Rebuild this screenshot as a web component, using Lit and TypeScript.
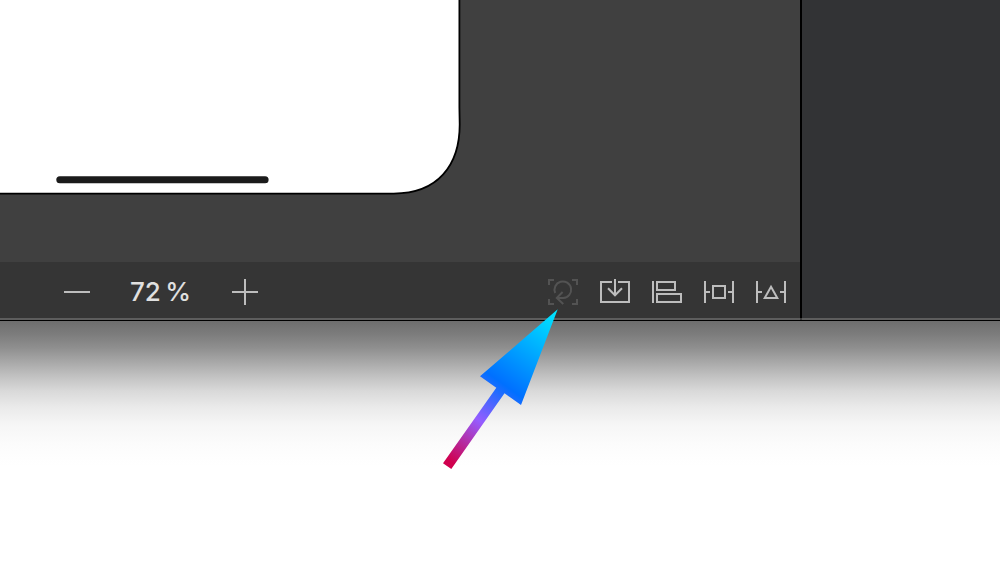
import { LitElement, html, css, svg } from "lit";
import { customElement } from "lit/decorators.js";

const icons = [
  { name: "Update frames", dim: true, art: svg`<path d="M1 6V1H6M24 1H29V6M1 20V25H6M24 25H29V20"/><path d="M7.2 14A8.3 8.3 0 1 1 15.3 19H9.5M14.6 13L8.8 18.9L15.3 25"/>` },
  { name: "Embed in", dim: false, art: svg`<path d="M12 3H1V23H29V3H18M15 0V16.5M8 9.3L15 16.3L22 9.3"/>` },
  { name: "Align", dim: false, art: svg`<path d="M1 2V24M5 3H23V11H5ZM5 15H29V23H5Z"/>` },
  { name: "Add constraints", dim: false, art: svg`<path d="M1 2V24M29 2V24M1 13H6M24 13H29M9 7H21V19H9Z"/>` },
  { name: "Resolve issues", dim: false, art: svg`<path d="M1 2V24M29 2V24M1 13H6M24 13H29M15 7.8L21.3 19H8.7Z"/>` },
];

@customElement("app-root")
export class AppRoot extends LitElement {
  static styles = css`
    :host { display: block; position: relative; width: 1000px; height: 584px; overflow: hidden; background: #fff; }
    svg { display: block; }
    .window { display: flex; height: 318px; }
    .editor { display: flex; flex-direction: column; width: 800px; border-right: 2px solid #000; }
    .canvas { height: 262px; background: #404040; }
    .toolbar { display: flex; align-items: center; justify-content: space-between; height: 56px; box-sizing: border-box; padding: 4px 14px 0 64px; background: #353535; }
    .zoom { display: flex; align-items: center; justify-content: space-between; width: 194px; color: #e0e0e0; font: 500 26px/26px Inter, sans-serif; }
    .value { white-space: pre; padding-right: 1px; word-spacing: -2.6px; }
    .tools { display: flex; gap: 22px; }
    .icon { fill: none; stroke: #bdbdbd; stroke-width: 2; }
    .dim { stroke: #535353; }
    .inspector { flex: 1; background: #323335; }
    .edge { height: 2px; background: linear-gradient(90deg, #5d5d5d 800px, #3c3c3c 800px 802px, #5d5d5d 802px); border-bottom: 1px solid #000; }
    .shadow { height: 263px; background: linear-gradient(#6e6e6e 0, #7c7c7c 13px, #8f8f8f 27px, #a8a8a8 41px, #c1c1c1 55px, #d9d9d9 70px, #eaeaea 86px, #f6f6f6 104px, #fcfcfc 124px, #fff 145px); }
    .pointer { position: absolute; left: 0; top: 0; }
  `;

  render() {
    return html`
      <div class="window">
        <div class="editor">
          <div class="canvas">
            <svg width="800" height="262" viewBox="0 0 800 262">
              <path d="M-5 -5H459.7V108L460 125C460 166 438 194 394 194H-5Z" fill="#fff" stroke="#000" stroke-width="1.8" transform="translate(-.3 -.4)"/>
              <rect x="56.3" y="176.3" width="212.3" height="7" rx="3.5" fill="#1b1b1b"/>
            </svg>
          </div>
          <div class="toolbar">
            <div class="zoom">
              <svg class="icon" width="26" height="26"><path d="M0 13H26"/></svg>
              <span class="value">72 %</span>
              <svg class="icon" width="26" height="26"><path d="M0 13H26M13 0V26"/></svg>
            </div>
            <div class="tools">
              ${icons.map((i) => html`<svg class="icon ${i.dim ? "dim" : ""}" width="30" height="26" viewBox="0 0 30 26" aria-label=${i.name}>${i.art}</svg>`)}
            </div>
          </div>
        </div>
        <div class="inspector"></div>
      </div>
      <div class="edge"></div>
      <div class="shadow"></div>
      <svg class="pointer" width="1000" height="584">
        <defs>
          <linearGradient id="flow" gradientUnits="userSpaceOnUse" x1="557" y1="310" x2="447" y2="466">
            <stop offset="0" stop-color="#00e8ff"/>
            <stop offset=".25" stop-color="#00aaff"/>
            <stop offset=".48" stop-color="#0070ff"/>
            <stop offset=".71" stop-color="#965cff"/>
            <stop offset=".97" stop-color="#d0004e"/>
          </linearGradient>
        </defs>
        <path d="M557.7 309.3L521 405L504.5 393.3L451.3 469L443 463.2L496.3 387.8L480 376.3Z" fill="url(#flow)"/>
      </svg>
    `;
  }
}
